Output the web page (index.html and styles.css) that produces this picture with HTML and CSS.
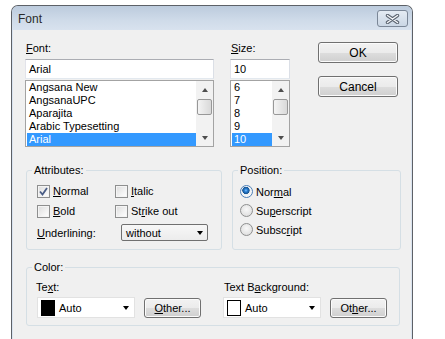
FILE: index.html
```html
<!DOCTYPE html>
<html lang="en">
<head>
  <meta charset="UTF-8" />
  <title>Font</title>
  <link rel="stylesheet" href="styles.css">
</head>
<body>

  <div class="window">
    <div class="titlebar">
      <span class="title">Font</span>
      <span class="close-btn">
        <svg width="15" height="10" viewBox="0 0 15 10">
          <path d="M2.5 1.5 L12.5 8.5 M12.5 1.5 L2.5 8.5" stroke="#5b6470" stroke-width="3.4" stroke-linecap="round" fill="none"/>
          <path d="M2.5 1.5 L12.5 8.5 M12.5 1.5 L2.5 8.5" stroke="#f4f6f9" stroke-width="1.4" stroke-linecap="round" fill="none"/>
        </svg>
      </span>
    </div>

    <div class="client">
      <!-- font / size / buttons -->
      <div class="top-row">
        <div class="font-col">
          <div class="lbl"><u>F</u>ont:</div>
          <div class="textbox">Arial</div>
          <div class="listbox">
            <ul class="items">
              <li>Angsana New</li>
              <li>AngsanaUPC</li>
              <li>Aparajita</li>
              <li>Arabic Typesetting</li>
              <li class="sel">Arial</li>
            </ul>
            <div class="vscroll">
              <span class="sb-btn"><span class="tri-up"></span></span>
              <span class="thumb"></span>
              <span class="sb-space"></span>
              <span class="sb-btn"><span class="tri-down small"></span></span>
            </div>
          </div>
        </div>

        <div class="size-col">
          <div class="lbl"><u>S</u>ize:</div>
          <div class="textbox">10</div>
          <div class="listbox">
            <ul class="items">
              <li>6</li>
              <li>7</li>
              <li>8</li>
              <li>9</li>
              <li class="sel">10</li>
            </ul>
            <div class="vscroll">
              <span class="sb-btn"><span class="tri-up"></span></span>
              <span class="thumb"></span>
              <span class="sb-space"></span>
              <span class="sb-btn"><span class="tri-down small"></span></span>
            </div>
          </div>
        </div>

        <div class="btn-col">
          <div class="btn btn-main">OK</div>
          <div class="btn btn-main">Cancel</div>
        </div>
      </div>

      <!-- attributes / position -->
      <div class="group-row">
        <fieldset class="group attributes">
          <legend>Attributes:</legend>
          <div class="checks">
            <div class="check-row">
              <span class="checkbox">
                <svg width="11" height="11" viewBox="0 0 11 11"><path d="M2 5.5 L4.5 8.5 L9 2" stroke="#4a5d86" stroke-width="1.8" fill="none"/></svg>
              </span>
              <span><u>N</u>ormal</span>
            </div>
            <div class="check-row">
              <span class="checkbox"></span>
              <span><u>I</u>talic</span>
            </div>
            <div class="check-row">
              <span class="checkbox"></span>
              <span><u>B</u>old</span>
            </div>
            <div class="check-row">
              <span class="checkbox"></span>
              <span>St<u>r</u>ike out</span>
            </div>
          </div>
          <div class="underline-row">
            <span class="underline-lbl"><u>U</u>nderlining:</span>
            <div class="dropdown">
              <span>without</span>
              <span class="tri-down"></span>
            </div>
          </div>
        </fieldset>

        <fieldset class="group position">
          <legend>Position:</legend>
          <div class="radios">
            <div class="radio-row">
              <span class="radio on"></span>
              <span>Nor<u>m</u>al</span>
            </div>
            <div class="radio-row">
              <span class="radio"></span>
              <span>Su<u>p</u>erscript</span>
            </div>
            <div class="radio-row">
              <span class="radio"></span>
              <span>Subsc<u>r</u>ipt</span>
            </div>
          </div>
        </fieldset>
      </div>

      <!-- color -->
      <fieldset class="group color">
        <legend>Color:</legend>
        <div class="color-cols">
          <div class="color-col first">
            <div class="lbl">Te<u>x</u>t:</div>
            <div class="combo-row">
              <div class="combo">
                <span class="swatch black"></span>
                <span class="combo-text">Auto</span>
                <span class="tri-down"></span>
              </div>
              <div class="btn btn-other"><u>O</u>ther...</div>
            </div>
          </div>
          <div class="color-col">
            <div class="lbl">Text B<u>a</u>ckground:</div>
            <div class="combo-row">
              <div class="combo">
                <span class="swatch white"></span>
                <span class="combo-text">Auto</span>
                <span class="tri-down"></span>
              </div>
              <div class="btn btn-other">Ot<u>h</u>er...</div>
            </div>
          </div>
        </div>
      </fieldset>
    </div>
  </div>

</body>
</html>
```

FILE: styles.css
```css
body {
  margin: 0;
  background: #fff;
  font-family: "Liberation Sans", Arial, sans-serif;
  font-size: 11px;
  color: #000;
  overflow: hidden;
}

.window {
  margin: 5px 0 0 11px;
  width: 400px;
  height: 340px;
  border: 1px solid #5d6167;
  border-bottom: none;
  border-radius: 7px 7px 0 0;
  background: #d9e3ef;
}

.titlebar {
  height: 24px;
  display: flex;
  align-items: center;
  justify-content: space-between;
  padding: 0 4px 0 6px;
  border-radius: 6px 6px 0 0;
  background: linear-gradient(#bccbdd, #cfdbe9 60%, #d8e2ee);
}

.title {
  font-size: 12px;
  color: #2b2b2b;
  margin-top: 1px;
}

.close-btn {
  width: 29px;
  height: 15px;
  display: flex;
  align-items: center;
  justify-content: center;
  border: 1px solid #7b8797;
  border-radius: 3px;
  background: linear-gradient(#e4ebf3, #cbd7e5);
  margin-top: 1px;
}

.client {
  margin: 0 1px;
  height: 316px;
  background: #f0f0f0;
}

/* top row */
.top-row {
  display: flex;
  padding: 11px 0 0 12px;
}

.font-col {
  width: 189px;
}

.size-col {
  width: 60px;
  margin-left: 16px;
}

.btn-col {
  margin-left: 28px;
  padding-top: 1px;
  display: flex;
  flex-direction: column;
  gap: 13px;
}

.lbl {
  height: 14px;
  line-height: 14px;
  padding-left: 1px;
  margin-bottom: 4px;
}

.textbox {
  box-sizing: border-box;
  height: 20px;
  line-height: 18px;
  padding-left: 3px;
  background: #fff;
  border: 1px solid;
  border-color: #abadb3 #dbdfe6 #e3e9ef #e2e3ea;
}

.listbox {
  box-sizing: border-box;
  margin-top: 1px;
  height: 67px;
  display: flex;
  background: #fff;
  border: 1px solid #a3a3a3;
}

.items {
  list-style: none;
  margin: 0;
  padding: 0 0 0 1px;
  flex: 1;
}

.items li {
  height: 13px;
  line-height: 13px;
  padding-left: 2px;
  white-space: nowrap;
}

.items li.sel {
  background: #3399ff;
  color: #fff;
}

.vscroll {
  width: 17px;
  display: flex;
  flex-direction: column;
  align-items: center;
  background: #f2f2f2;
}

.sb-btn {
  height: 17px;
  width: 17px;
  display: flex;
  align-items: center;
  justify-content: center;
}

.sb-space {
  flex: 1;
}

.thumb {
  box-sizing: border-box;
  width: 15px;
  height: 16px;
  margin-top: 1px;
  border: 1px solid #989898;
  border-radius: 2px;
  background: linear-gradient(90deg, #f4f4f4, #e6e6e6 50%, #d9d9d9);
}

.tri-up {
  width: 0;
  height: 0;
  border-left: 3.5px solid transparent;
  border-right: 3.5px solid transparent;
  border-bottom: 4px solid #4e4e4e;
}

.tri-down {
  width: 0;
  height: 0;
  border-left: 3.5px solid transparent;
  border-right: 3.5px solid transparent;
  border-top: 4px solid #000;
}

.tri-down.small {
  border-top-color: #4e4e4e;
}

/* buttons */
.btn {
  box-sizing: border-box;
  display: flex;
  align-items: center;
  justify-content: center;
  border: 1px solid #707070;
  border-radius: 3px;
  background: linear-gradient(#f2f2f2, #ebebeb 50%, #dddddd 51%, #cfcfcf);
  box-shadow: inset 0 0 0 1px #fbfbfb;
}

.btn-main {
  width: 80px;
  height: 21px;
  font-size: 12px;
}

.btn-other {
  width: 57px;
  height: 20px;
}

/* group boxes */
.group {
  box-sizing: border-box;
  margin: 0;
  min-width: 0;
  padding: 0 0 8px 5px;
  border: 1px solid #d5dfe5;
  border-radius: 3px;
}

.group legend {
  padding: 0 2px;
  height: 13px;
  line-height: 13px;
}

.group-row {
  display: flex;
  gap: 10px;
  margin: 17px 0 0 13px;
}

.attributes {
  width: 196px;
}

.position {
  width: 169px;
}

.checks {
  display: grid;
  grid-template-columns: 78px auto;
  grid-auto-rows: 20px;
  padding: 4px 0 0 5px;
}

.check-row,
.radio-row {
  display: flex;
  align-items: center;
  gap: 3px;
}

.checkbox {
  box-sizing: border-box;
  width: 13px;
  height: 13px;
  display: flex;
  align-items: center;
  justify-content: center;
  border: 1px solid #8e8f8f;
  background: linear-gradient(135deg, #dcdcdc, #f6f6f6 70%, #fff);
  box-shadow: inset 0 0 0 1px #f4f4f4;
}

.underline-row {
  display: flex;
  align-items: center;
  height: 17px;
  margin-top: 3px;
  padding-left: 5px;
}

.underline-lbl {
  width: 84px;
}

.dropdown {
  box-sizing: border-box;
  width: 87px;
  height: 17px;
  display: flex;
  align-items: center;
  justify-content: space-between;
  padding: 0 4px 0 4px;
  border: 1px solid #707070;
  border-radius: 2px;
  background: linear-gradient(#f7f7f7, #ececec);
}

.radios {
  padding: 5px 0 0 2px;
}

.radio-row {
  height: 19px;
}

.radio {
  box-sizing: border-box;
  width: 13px;
  height: 13px;
  border-radius: 50%;
  border: 1px solid #8e8f8f;
  background: radial-gradient(circle at 50% 40%, #f8f8f8, #e2e2e2 70%, #d4d4d4);
}

.radio.on {
  border-color: #4c7fb8;
  background: radial-gradient(circle at 45% 40%, #7cc3ff 0, #2a7fd4 1.5px, #17538f 3.4px, #e9eef3 3.9px, #f6f6f6 5.5px);
}

/* color */
.color {
  width: 374px;
  margin: 11px 0 0 13px;
  padding-bottom: 7px;
}

.color-cols {
  display: flex;
  padding: 6px 0 0 4px;
}

.color-col.first {
  width: 187px;
}

.color-col .lbl {
  margin-bottom: 3px;
  padding-left: 0;
}

.color-col:not(.first) .lbl {
  padding-left: 1px;
}

.combo-row {
  display: flex;
  align-items: center;
  gap: 9px;
}

.color-col.first .combo-row {
  padding-left: 1px;
}

.combo {
  box-sizing: border-box;
  width: 98px;
  height: 21px;
  display: flex;
  align-items: center;
  padding: 0 5px 0 3px;
  background: #fff;
  border: 1px solid #e2e2e2;
}

.combo-text {
  flex: 1;
  margin-left: 4px;
}

.swatch {
  box-sizing: border-box;
  width: 14px;
  height: 16px;
}

.swatch.black {
  background: #000;
}

.swatch.white {
  background: #fff;
  border: 1px solid #000;
}
```
